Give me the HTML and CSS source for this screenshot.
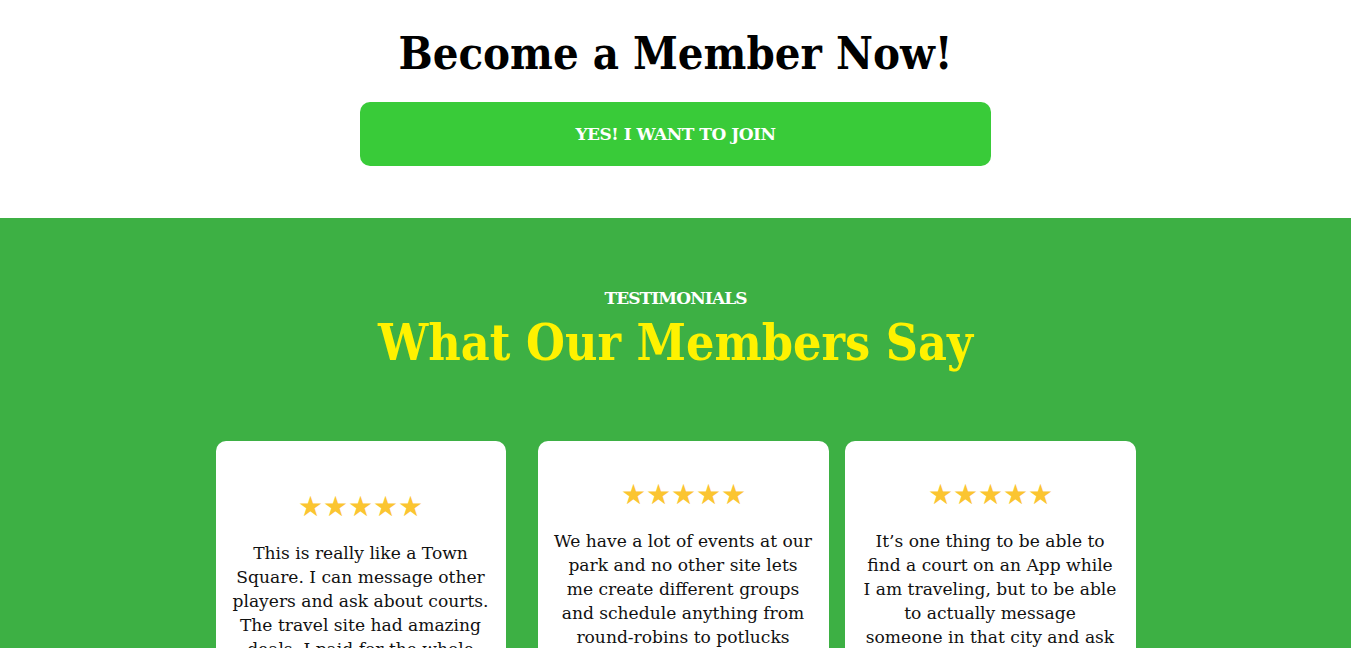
FILE: index.html
```html
<!DOCTYPE html>
<html lang="en">
<head>
<meta charset="utf-8">
<title>Become a Member</title>
<link rel="stylesheet" href="styles.css">
</head>
<body>
<section class="join">
  <h1 class="join-title">Become a Member Now!</h1>
  <a class="join-btn" href="#">YES! I WANT TO JOIN</a>
</section>
<section class="testimonials">
  <p class="eyebrow">TESTIMONIALS</p>
  <h2 class="section-title">What Our Members Say</h2>
  <div class="cards">
    <article class="card card-first">
      <div class="stars">★★★★★</div>
      <p class="quote">This is really like a Town<br>Square. I can message other<br>players and ask about courts.<br>The travel site had amazing<br>deals. I paid for the whole<br>year with one single trip!</p>
    </article>
    <article class="card">
      <div class="stars">★★★★★</div>
      <p class="quote">We have a lot of events at our<br>park and no other site lets<br>me create different groups<br>and schedule anything from<br>round-robins to potlucks<br>and everything in between.<br>Love it!</p>
    </article>
    <article class="card">
      <div class="stars">★★★★★</div>
      <p class="quote">It’s one thing to be able to<br>find a court on an App while<br>I am traveling, but to be able<br>to actually message<br>someone in that city and ask<br>where to play is priceless.<br>Highly recommended!</p>
    </article>
  </div>
</section>
</body>
</html>
```
FILE: styles.css
```css
* { box-sizing: border-box; }
html, body { margin: 0; padding: 0; }
body {
  font-family: "DejaVu Serif", "Liberation Serif", serif;
  color: #111;
  background: #fff;
}
.join {
  display: flex;
  flex-direction: column;
  align-items: center;
  padding: 22px 0 52px;
}
.join-title {
  margin: 0;
  font-family: "DejaVu Serif Condensed", "DejaVu Serif", serif;
  font-size: 45px;
  line-height: 64px;
  font-weight: 700;
  color: #000;
}
.join-btn {
  margin-top: 16px;
  width: 631px;
  height: 64px;
  display: flex;
  align-items: center;
  justify-content: center;
  background: #39cb39;
  border-radius: 10px;
  color: #fff;
  text-decoration: none;
  font-weight: 700;
  font-size: 17px;
  letter-spacing: -0.5px;
}
.testimonials {
  background: #3db044;
  padding: 70px 0 60px;
  display: flex;
  flex-direction: column;
  align-items: center;
}
.eyebrow {
  margin: 0;
  color: #fff;
  font-size: 17px;
  line-height: 20px;
  font-weight: 700;
  letter-spacing: -0.9px;
}
.section-title {
  margin: 4px 0 0;
  font-family: "DejaVu Serif Condensed", "DejaVu Serif", serif;
  color: #fff200;
  font-size: 49.7px;
  line-height: 62px;
  font-weight: 700;
}
.cards {
  margin-top: 67px;
  display: flex;
  gap: 16px;
  align-items: stretch;
}
.card {
  width: 291px;
  background: #fff;
  border-radius: 10px;
  padding: 39px 12px;
  display: flex;
  flex-direction: column;
  justify-content: center;
  align-items: center;
  text-align: center;
}
.card-first { width: 290px; margin-right: 16px; }
.stars {
  color: #fbc531;
  font-size: 27.5px;
  line-height: 28px;
}
.quote {
  margin: 21px 0 0;
  font-size: 17.1px;
  line-height: 24px;
  color: #111;
  white-space: nowrap;
}
```
